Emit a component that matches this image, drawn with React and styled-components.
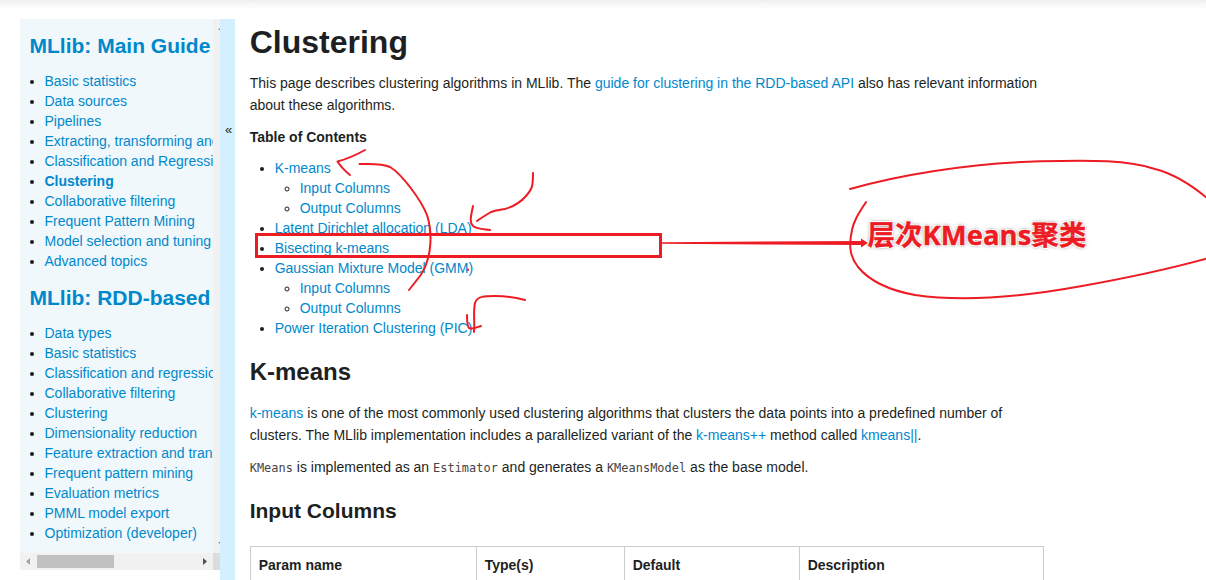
import React from "react";
import styled, { createGlobalStyle } from "styled-components";

const GlobalStyle = createGlobalStyle`
  * { box-sizing: border-box; }
  html, body { margin: 0; padding: 0; overflow: hidden; background: #fff; }
  body {
    font-family: "Liberation Sans", Arial, sans-serif;
    font-size: 14px;
    line-height: 22px;
    color: #1d1f22;
  }
`;

const Page = styled.div`
  position: relative;
  display: flex;
  flex-direction: column;
  width: 1206px;
  height: 580px;
  overflow: hidden;
`;
const HeaderShadow = styled.div`
  flex: none;
  height: 19px;
  background: linear-gradient(#efefef 0, #f8f8f8 4px, #fff 10px);
`;
const Body = styled.div`
  display: flex;
  flex: 1;
  min-height: 0;
  padding-left: 20px;
`;
const Sidebar = styled.aside`
  display: flex;
  flex-direction: column;
  width: 200px;
  height: 551px;
  background: #f0f8fc;
`;
const SidebarMain = styled.div`
  display: flex;
  height: 534px;
`;
const SidebarMenu = styled.nav`
  width: 193px;
  padding: 12px 0 0 9.5px;
  overflow: hidden;
  white-space: nowrap;
`;
const VerticalTrack = styled.div`
  display: flex;
  flex-direction: column;
  justify-content: space-between;
  align-items: flex-end;
  width: 7px;
  padding: 9px 0;
  background: #f1f1f1;
`;
const HorizontalTrack = styled.div`
  display: flex;
  align-items: center;
  height: 17px;
  background: #f1f1f1;
`;
const ArrowSlot = styled.svg`
  display: block;
  flex: none;
`;
const Thumb = styled.div`
  width: 77px;
  height: 13px;
  margin-right: 83px;
  background: #c1c1c1;
`;
const Corner = styled.div`
  width: 7px;
  height: 17px;
  background: #dcdcdc;
`;
const MenuTitle = styled.h3`
  margin: 0;
  height: 30px;
  font-size: 21px;
  line-height: 30px;
  color: #0088cc;
`;
const MenuList = styled.ul`
  margin: 10px 0 12px;
  padding: 0 0 0 15px;
  line-height: 20px;
`;
const MenuItem = styled.li`
  a { font-weight: ${(p) => (p.$active ? 700 : 400)}; }
`;
const Link = styled.a`
  color: #0088cc;
  text-decoration: none;
`;
const Toggle = styled.div`
  width: 15px;
  padding: 100px 0 0 5px;
  font-size: 13px;
  line-height: 22px;
  background: #d4f0ff;
`;
const Content = styled.main`
  width: 809px;
  padding: 3px 0 0 14.7px;
`;
const PageTitle = styled.h1`
  margin: 0 0 10px;
  font-size: 32px;
  line-height: 40px;
`;
const Paragraph = styled.p`
  margin: 0 0 10px;
  white-space: nowrap;
`;
const TocTitle = styled.div`
  margin-bottom: 10px;
  font-weight: 700;
`;
const TocList = styled.ul`
  margin: 0;
  padding-left: 25px;
  line-height: 20px;
`;
const SectionTitle = styled.h2`
  margin: 14px 0 10px;
  font-size: 24px;
  line-height: 40px;
`;
const SubTitle = styled.h3`
  margin: 18px 0 20px;
  font-size: 21px;
  line-height: 30px;
`;
const Code = styled.code`
  font-family: "DejaVu Sans Mono", monospace;
  font-size: 11.9px;
  line-height: 1;
  letter-spacing: 0.05px;
  color: #444;
`;
const ParamTable = styled.div`
  display: grid;
  grid-template-columns: 226px 148px 175px 244px;
  width: 794px;
  height: 60px;
  border: solid #ccc;
  border-width: 1px 0 0 1px;
`;
const HeadCell = styled.div`
  padding: 7px 8px;
  font-weight: 700;
  border-right: 1px solid #ccc;
`;
const Ink = styled.svg`
  position: absolute;
  inset: 0;
  pointer-events: none;
`;
const Note = styled.div`
  position: absolute;
  left: 867.5px;
  top: 216px;
  font-family: "Open Sans", "Noto Sans CJK SC", sans-serif;
  font-size: 27.4px;
  font-weight: 700;
  line-height: 38px;
  letter-spacing: 0.1px;
  white-space: nowrap;
  color: #ed1c24;
  -webkit-text-stroke: 0.4px #ed1c24;
  text-shadow: -1px -1px 0 #fff, 1px -1px 0 #fff, -1px 1px 0 #fff, 1px 1px 0 #fff,
    0 0 3px #888, 0 0 4px #aaa;
`;

const menus = [
  {
    title: "MLlib: Main Guide",
    items: [
      "Basic statistics", "Data sources", "Pipelines",
      "Extracting, transforming and selecting features",
      "Classification and Regression", "Clustering", "Collaborative filtering",
      "Frequent Pattern Mining", "Model selection and tuning", "Advanced topics",
    ],
    active: "Clustering",
  },
  {
    title: "MLlib: RDD-based API Guide",
    items: [
      "Data types", "Basic statistics", "Classification and regression",
      "Collaborative filtering", "Clustering", "Dimensionality reduction",
      "Feature extraction and transformation", "Frequent pattern mining",
      "Evaluation metrics", "PMML model export", "Optimization (developer)",
    ],
  },
];

const toc = [
  { label: "K-means", children: ["Input Columns", "Output Columns"] },
  { label: "Latent Dirichlet allocation (LDA)" },
  { label: "Bisecting k-means" },
  { label: "Gaussian Mixture Model (GMM)", children: ["Input Columns", "Output Columns"] },
  { label: "Power Iteration Clustering (PIC)" },
];

const columns = ["Param name", "Type(s)", "Default", "Description"];

function Annotations() {
  return (
    <>
      <Ink width="1206" height="580" fill="none" stroke="#ed1c24" strokeWidth="2" strokeLinecap="round" strokeLinejoin="round">
        <rect x="256.5" y="234.5" width="404" height="22" strokeWidth="3" strokeLinejoin="miter" />
        <path d="M662 242.2L861 241V238.5L868 243L861 247.5V245L662 243.8Z" fill="#ed1c24" stroke="none" />
        <path d="M365 150C356 155 347 159 337.5 161.5C341 167 345 171 350 175" />
        <path d="M359.500 164C370 164 382 163 390 167C402 174 421 200 427 215C434 237 430 262 420 276C416 281 413 285 409 290" />
        <path d="M533 173C533 187 532 189 526 196C519 204 512 207 505 209C500 210 496 210 491 212C486 215 481 218 477 221" />
        <path d="M473 206C471 216 469 222 473 226C477 229 483 229 490 230" />
        <path d="M525 300C514 297 505 296 495 296C485 296 477 296 475 303C473 312 475 321 474 332" />
        <path d="M467 315C467 322 467 326 469 328C473 330 477 327 481 326" />
        <path d="M468 269.500V270" />
        <path d="M850 189C895 176 967 163 1040 161.300C1093 160 1128 160 1155 169C1178 175 1195 188 1207 198" />
        <path d="M866 202C859 213 854 220 852 230C848 248 851 258 858 267C872 284 893 291 915 295C964 302 1027 296 1082 286C1127 278 1169 269 1207 258.500" />
      </Ink>
      <Note>层次KMeans聚类</Note>
    </>
  );
}

export default function App() {
  return (
    <Page>
      <GlobalStyle />
      <HeaderShadow />
      <Body>
        <Sidebar>
          <SidebarMain>
            <SidebarMenu>
              {menus.map((menu) => (
                <React.Fragment key={menu.title}>
                  <MenuTitle>{menu.title}</MenuTitle>
                  <MenuList>
                    {menu.items.map((item) => (
                      <MenuItem key={item} $active={item === menu.active}>
                        <Link>{item}</Link>
                      </MenuItem>
                    ))}
                  </MenuList>
                </React.Fragment>
              ))}
            </SidebarMenu>
            <VerticalTrack>
              <ArrowSlot width="2" height="2"><path d="M2 0V2H0Z" fill="#888" /></ArrowSlot>
              <ArrowSlot width="2" height="2"><path d="M0 0H2V2Z" fill="#888" /></ArrowSlot>
            </VerticalTrack>
          </SidebarMain>
          <HorizontalTrack>
            <ArrowSlot width="17" height="17"><path d="M10 5V12L6 8.500Z" fill="#a3a3a3" /></ArrowSlot>
            <Thumb />
            <ArrowSlot width="16" height="17"><path d="M6 5V12L10 8.500Z" fill="#505050" /></ArrowSlot>
            <Corner />
          </HorizontalTrack>
        </Sidebar>
        <Toggle>«</Toggle>
        <Content>
          <PageTitle>Clustering</PageTitle>
          <Paragraph>
            This page describes clustering algorithms in MLlib. The{" "}
            <Link>guide for clustering in the RDD-based API</Link> also has relevant information
            <br />
            about these algorithms.
          </Paragraph>
          <TocTitle>Table of Contents</TocTitle>
          <TocList>
            {toc.map((entry) => (
              <li key={entry.label}>
                <Link>{entry.label}</Link>
                {entry.children && (
                  <TocList>
                    {entry.children.map((child) => (
                      <li key={child}><Link>{child}</Link></li>
                    ))}
                  </TocList>
                )}
              </li>
            ))}
          </TocList>
          <SectionTitle>K-means</SectionTitle>
          <Paragraph>
            <Link>k-means</Link> is one of the most commonly used clustering algorithms that clusters the data points into a predefined number of
            <br />
            clusters. The MLlib implementation includes a parallelized variant of the{" "}
            <Link>k-means++</Link> method called <Link>kmeans||</Link>.
          </Paragraph>
          <Paragraph>
            <Code>KMeans</Code> is implemented as an <Code>Estimator</Code> and generates a{" "}
            <Code>KMeansModel</Code> as the base model.
          </Paragraph>
          <SubTitle>Input Columns</SubTitle>
          <ParamTable>
            {columns.map((name) => (
              <HeadCell key={name}>{name}</HeadCell>
            ))}
          </ParamTable>
        </Content>
      </Body>
      <Annotations />
    </Page>
  );
}
